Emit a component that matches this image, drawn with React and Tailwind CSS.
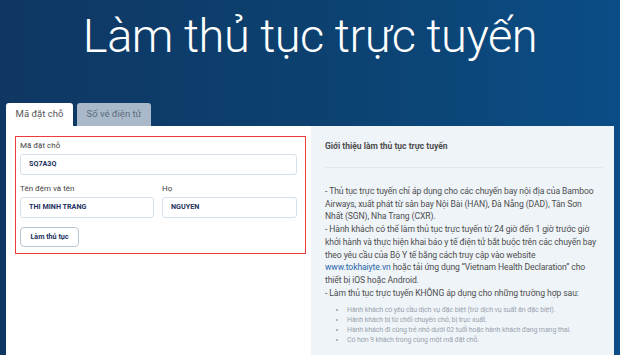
import React from 'react';

const font = { fontFamily: '"Roboto", "Liberation Sans", sans-serif' };

const Field = ({ label, value, className = '' }) => (
    <div className={className}>
        <div className="text-[8px] leading-[10px] text-[#444] mb-[3px]">{label}</div>
        <div className="h-[21px] border border-[#d5e1ec] rounded-[3px] flex items-center px-[8px] text-[7.2px] font-bold text-[#1d3260]">
            {value}
        </div>
    </div>
);

const App = () => {
    return (
        <div
            className="w-[620px] h-[355px] overflow-hidden bg-gradient-to-r from-[#0f3764] via-[#0c416f] to-[#0b4d86]"
            style={font}
        >
            {/* Title */}
            <h1 className="h-[103px] pt-[5px] text-center text-white text-[47px] font-light leading-[62px] tracking-[-0.5px]">
                Làm thủ tục trực tuyến
            </h1>

            {/* Tabs */}
            <div className="flex gap-[4px] pl-[6px] h-[23px]">
                <div className="w-[67px] bg-white rounded-t-[3px] flex items-center justify-center text-[9.5px] text-[#555]">
                    Mã đặt chỗ
                </div>
                <div className="w-[74px] bg-[#a9b9ca] rounded-t-[3px] flex items-center justify-center text-[9.5px] text-[#5d6b7b]">
                    Số vé điện tử
                </div>
            </div>

            {/* Panel */}
            <div className="flex mx-[6px] h-[229px]">
                <div className="w-[305px] bg-white pt-[10px] pl-[9px] pr-[5px]">
                    <div className="h-[118px] border-[1.5px] border-[#ef3b3b] pt-[4px] pl-[4px] pr-[8px]">
                        <Field label="Mã đặt chỗ" value="SQ7A3Q" />
                        <div className="flex gap-[8px] mt-[9px]">
                            <Field label="Tên đệm và tên" value="THI MINH TRANG" className="w-[134px]" />
                            <Field label="Họ" value="NGUYEN" className="flex-1" />
                        </div>
                        <button className="mt-[9px] w-[59px] h-[20px] border border-[#b9c6d3] rounded-[4px] text-[7.2px] font-bold text-[#1d3260]">
                            Làm thủ tục
                        </button>
                    </div>
                </div>

                <div className="flex-1 bg-[#eff4f9] pl-[14px] pr-[11px] text-[#4d4d4d]">
                    <div className="pt-[14px] pb-[15px] border-b border-[#dfe6ee] text-[8.5px] font-bold leading-[12px]">
                        Giới thiệu làm thủ tục trực tuyến
                    </div>
                    <div className="pt-[17px] text-[8.6px] leading-[12.7px] tracking-[-0.1px]">
                        <p>
                            - Thủ tục trực tuyến chỉ áp dụng cho các chuyến bay nội địa của Bamboo Airways, xuất phát từ sân bay Nội Bài (HAN), Đà Nẵng (DAD), Tân Sơn
                            <br />
                            Nhất (SGN), Nha Trang (CXR).
                        </p>
                        <p>
                            - Hành khách có thể làm thủ tục trực tuyến từ 24 giờ đến 1 giờ trước giờ khởi hành và thực hiện khai báo y tế điện tử bắt buộc trên các chuyến bay theo yêu cầu của Bộ Y tế bằng cách truy cập vào website
                            <br />
                            <span className="text-[#2a66a8]">www.tokhaiyte.vn</span>
                            <span> hoặc tải ứng dụng “Vietnam Health Declaration” cho</span>
                            <br />
                            thiết bị iOS hoặc Android.
                        </p>
                        <p>- Làm thủ tục trực tuyến KHÔNG áp dụng cho những trường hợp sau:</p>
                        <ul className="mt-[7px] pl-[22px] list-disc text-[7px] leading-[9.8px] text-[#9aa3ad]">
                            <li>Hành khách có yêu cầu dịch vụ đặc biệt (trừ dịch vụ suất ăn đặc biệt).</li>
                            <li>Hành khách bị từ chối chuyên chở, bị trục xuất.</li>
                            <li>Hành khách đi cùng trẻ nhỏ dưới 02 tuổi hoặc hành khách đang mang thai.</li>
                            <li>Có hơn 9 khách trong cùng một mã đặt chỗ.</li>
                        </ul>
                    </div>
                </div>
            </div>
        </div>
    );
};

export default App;
